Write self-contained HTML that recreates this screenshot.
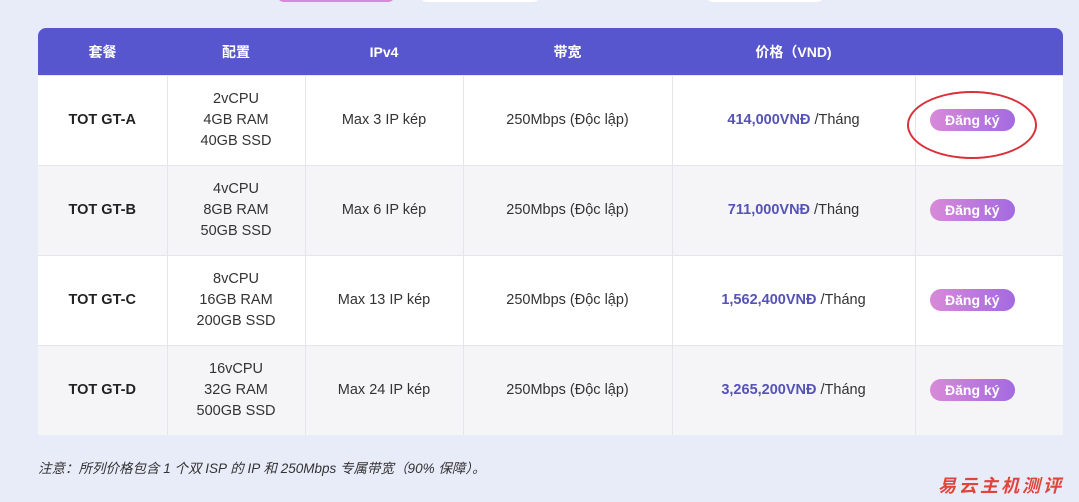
<!DOCTYPE html>
<html><head><meta charset="utf-8"><style>
body{margin:0;width:1079px;height:502px;overflow:hidden;background:#e8ebf8;font-family:"Liberation Sans","Noto Sans CJK SC",sans-serif;position:relative}
.tab{position:absolute;top:-12px;height:14px;border-radius:8px;background:#fff}
table{position:absolute;left:38px;top:28px;width:1025px;border-collapse:collapse;table-layout:fixed}
th{background:#5856cf;color:#fff;font-weight:bold;font-size:14px;height:47px;padding:0}
th:first-child{border-top-left-radius:8px}
th:last-child{border-top-right-radius:8px}
td{height:89px;padding:0;text-align:center;font-size:14.5px;color:#333;line-height:21px;border-left:1px solid #e6e6ea;border-top:1px solid #e6e6ea}
td:first-child{border-left:none;font-weight:bold;color:#222}
td:last-child{padding-right:34px}
tr.g td{background:#f5f5f7}
tr.w td{background:#fff}
.p{color:#5552b8;font-weight:bold}
.b{display:inline-block;width:85px;height:22px;line-height:22px;border-radius:11px;background:linear-gradient(90deg,#d88ad8,#a36ae0);color:#fff;font-weight:bold;font-size:14px}
.note{position:absolute;left:38px;top:457px;font-size:13.5px;font-style:italic;color:#333}
.wm{position:absolute;left:938px;top:472px;font-size:18px;font-weight:bold;font-style:italic;color:#e0443a;letter-spacing:3px}
.ring{position:absolute;left:907px;top:91px;width:126px;height:64px;border:2px solid #d9303a;border-radius:50%}
</style></head><body>
<div class="tab" style="left:277px;width:118px;background:#d78ad8"></div>
<div class="tab" style="left:420px;width:120px"></div>
<div class="tab" style="left:706px;width:118px"></div>
<table>
<colgroup><col style="width:129px"><col style="width:138px"><col style="width:158px"><col style="width:209px"><col style="width:243px"><col style="width:148px"></colgroup>
<tr><th>套餐</th><th>配置</th><th>IPv4</th><th>带宽</th><th>价格（VND)</th><th></th></tr>
<tr class="w"><td>TOT GT-A</td><td>2vCPU<br>4GB RAM<br>40GB SSD</td><td>Max 3 IP kép</td><td>250Mbps (Độc lập)</td><td><span class="p">414,000VNĐ</span> /Tháng</td><td><span class="b">Đăng ký</span></td></tr>
<tr class="g"><td>TOT GT-B</td><td>4vCPU<br>8GB RAM<br>50GB SSD</td><td>Max 6 IP kép</td><td>250Mbps (Độc lập)</td><td><span class="p">711,000VNĐ</span> /Tháng</td><td><span class="b">Đăng ký</span></td></tr>
<tr class="w"><td>TOT GT-C</td><td>8vCPU<br>16GB RAM<br>200GB SSD</td><td>Max 13 IP kép</td><td>250Mbps (Độc lập)</td><td><span class="p">1,562,400VNĐ</span> /Tháng</td><td><span class="b">Đăng ký</span></td></tr>
<tr class="g"><td>TOT GT-D</td><td>16vCPU<br>32G RAM<br>500GB SSD</td><td>Max 24 IP kép</td><td>250Mbps (Độc lập)</td><td><span class="p">3,265,200VNĐ</span> /Tháng</td><td><span class="b">Đăng ký</span></td></tr>
</table>
<div class="ring"></div>
<div class="note">注意：所列价格包含 1 个双 ISP 的 IP 和 250Mbps 专属带宽（90% 保障）。</div>
<div class="wm">易云主机测评</div>
</body></html>
